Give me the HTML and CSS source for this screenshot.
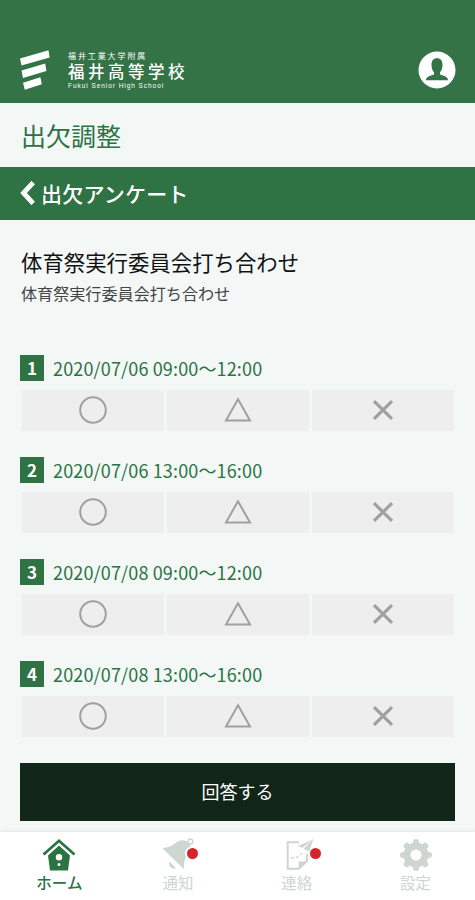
FILE: index.html
```
<!DOCTYPE html>
<html lang="ja">

<head>
    <meta charset="UTF-8">
    <meta name="viewport" content="width=device-width, initial-scale=1.0">
    <title>出欠調整</title>
    <link rel="stylesheet" href="styles.css">
</head>

<body>
    <!-- shared icons -->
    <svg class="defs" width="0" height="0">
        <symbol id="maru" viewBox="0 0 30 30">
            <circle cx="15" cy="15" r="12.8" />
        </symbol>
        <symbol id="sankaku" viewBox="0 0 30 30">
            <path d="M15 4.2 27 25.4H3Z" />
        </symbol>
        <symbol id="batsu" viewBox="0 0 30 30">
            <path d="M6 6.2 24 23.8M24 6.2 6 23.8" stroke-width="3.2" />
        </symbol>
    </svg>

    <header class="header">
        <div class="logo">
            <svg class="logo-mark" viewBox="0 0 30 40">
                <path d="M0 8.5 28.5.3 29.6 7.4 1.5 15.6ZM1.6 20.6 25.2 13.6 26.4 21 2.9 28ZM3 32.7 20.4 27.2 21.8 34.3 4.8 39.8Z" />
            </svg>
            <div class="logo-text">
                <span class="logo-sub">福井工業大学附属</span>
                <span class="logo-name">福井高等学校</span>
                <span class="logo-en">Fukui Senior High School</span>
            </div>
        </div>
        <svg class="user" viewBox="0 0 38 38">
            <circle cx="19" cy="19" r="18.5" fill="#fff" />
            <path d="M19 7.2c-3.800 0-5.500 2.700-5.500 6.500 0 3.400 1 5.900 2.500 7.500v2.200c-4 1.600-8 1.800-8 5.800h22c0-4-4-4.200-8-5.800v-2.200c1.500-1.600 2.500-4.100 2.500-7.500 0-3.800-1.700-6.500-5.500-6.500z" fill="#347346" />
        </svg>
    </header>

    <h1 class="page-title">出欠調整</h1>

    <div class="back-bar">
        <svg class="back-icon" viewBox="0 0 16 24">
            <path d="M13.2 1.5 3.500 12 13.2 22.5" />
        </svg>
        <span>出欠アンケート</span>
    </div>

    <main class="content">
        <h2>体育祭実行委員会打ち合わせ</h2>
        <p class="detail">体育祭実行委員会打ち合わせ</p>

        <section class="slot">
            <div class="slot-head"><span class="num">1</span><span class="date">2020/07/06 09:00～12:00</span></div>
            <div class="choices">
                <div class="choice"><svg><use href="#maru" /></svg></div>
                <div class="choice"><svg><use href="#sankaku" /></svg></div>
                <div class="choice"><svg><use href="#batsu" /></svg></div>
            </div>
        </section>
        <section class="slot">
            <div class="slot-head"><span class="num">2</span><span class="date">2020/07/06 13:00～16:00</span></div>
            <div class="choices">
                <div class="choice"><svg><use href="#maru" /></svg></div>
                <div class="choice"><svg><use href="#sankaku" /></svg></div>
                <div class="choice"><svg><use href="#batsu" /></svg></div>
            </div>
        </section>
        <section class="slot">
            <div class="slot-head"><span class="num">3</span><span class="date">2020/07/08 09:00～12:00</span></div>
            <div class="choices">
                <div class="choice"><svg><use href="#maru" /></svg></div>
                <div class="choice"><svg><use href="#sankaku" /></svg></div>
                <div class="choice"><svg><use href="#batsu" /></svg></div>
            </div>
        </section>
        <section class="slot">
            <div class="slot-head"><span class="num">4</span><span class="date">2020/07/08 13:00～16:00</span></div>
            <div class="choices">
                <div class="choice"><svg><use href="#maru" /></svg></div>
                <div class="choice"><svg><use href="#sankaku" /></svg></div>
                <div class="choice"><svg><use href="#batsu" /></svg></div>
            </div>
        </section>

        <button type="button" class="submit">回答する</button>
    </main>

    <nav class="tabs">
        <a class="tab active">
            <svg viewBox="0 0 34 34">
                <path d="M1.5 17.5 17 3.8 32.500 17.5" fill="none" stroke="currentColor" stroke-width="2.800" />
                <path fill-rule="evenodd" d="M17 8.500 28 18.500 26 33.500H8L6 18.500ZM17 17a3.200 3.200 0 1 0 0 6.400 3.200 3.200 0 0 0 0-6.400ZM17 26a1.500 1.500 0 1 0 0 3 1.500 1.500 0 0 0 0-3Z" fill="currentColor" />
            </svg>
            <span>ホーム</span>
        </a>
        <a class="tab">
            <svg viewBox="0 0 34 34">
                <circle cx="29.5" cy="4.500" r="2.400" fill="none" stroke="currentColor" stroke-width="1.500" />
                <path d="M1.200 11C8 11 11.500 8.500 15 5.800 19 2.500 24 2.500 27.500 5.800c3.500 4 3 8-.5 12-3.500 4-5 8-3.500 15ZM8.500 24.500l6.500 6.800c-4 1.500-8-1.500-6.500-6.800Z" fill="currentColor" />
            </svg>
            <i class="dot"></i>
            <span>通知</span>
        </a>
        <a class="tab mail">
            <svg viewBox="0 0 34 34">
                <path d="M19 5.200H7.700v26.600H19L27 23.500V17" fill="none" stroke="currentColor" stroke-width="2" />
                <path d="M18.500 33V24.500H28ZM33.500 2 17.500 9.300l5 1.400ZM33.500 2 23.500 11.700 29 14.500Z" fill="currentColor" />
                <path d="M11 20.500c5 1.500 10-1.500 12-6.500" fill="none" stroke="currentColor" stroke-width="1.400" stroke-dasharray="3 2" />
            </svg>
            <i class="dot"></i>
            <span>連絡</span>
        </a>
        <a class="tab">
            <svg viewBox="0 0 34 34">
                <circle cx="17" cy="18" r="9" fill="none" stroke="currentColor" stroke-width="7" />
                <path d="M17 5v26M4 18h26M7.800 8.800l18.400 18.400M26.200 8.800l-18.400 18.400" fill="none" stroke="currentColor" stroke-width="6" stroke-linecap="round" />
                <circle cx="17" cy="18" r="5.600" fill="#fff" />
            </svg>
            <span>設定</span>
        </a>
    </nav>
</body>

</html>
```
FILE: styles.css
```
* {
    box-sizing: border-box;
}

body {
    margin: 0;
    height: 900px;
    display: flex;
    flex-direction: column;
    overflow: hidden;
    background: #f3f8f7;
    color: #111;
    font-family: "Noto Sans CJK JP", sans-serif;
}

.defs {
    position: absolute;
}

.header {
    height: 103px;
    padding: 50px 19px 0 20px;
    display: flex;
    justify-content: space-between;
    align-items: flex-start;
    background: #347346;
    color: #fff;
}

.logo {
    display: flex;
    gap: 18px;
}

.logo-mark {
    width: 30px;
    height: 40px;
    fill: #fff;
}

.logo-text {
    display: flex;
    flex-direction: column;
    white-space: nowrap;
}

.logo-sub {
    font-size: 8px;
    line-height: 12px;
    letter-spacing: 1.9px;
}

.logo-name {
    font-size: 16.5px;
    line-height: 18px;
    letter-spacing: 3.5px;
    font-weight: 500;
}

.logo-en {
    font-family: "Liberation Sans", sans-serif;
    font-size: 6.5px;
    line-height: 11px;
    letter-spacing: 0.95px;
}

.user {
    width: 38px;
    height: 38px;
    margin-top: 1px;
}

.page-title {
    height: 64px;
    margin: 0;
    padding-left: 21px;
    font-size: 25px;
    font-weight: 400;
    line-height: 64px;
    color: #2c7344;
}

.back-bar {
    height: 53px;
    padding: 0 0 1px 20px;
    display: flex;
    align-items: center;
    gap: 5px;
    background: #2f7344;
    color: #fff;
    font-size: 21px;
    font-weight: 500;
    letter-spacing: 0.2px;
}

.back-icon {
    width: 16px;
    height: 24px;
    fill: none;
    stroke: #fff;
    stroke-width: 4.8;
}

.content {
    flex: 1;
    padding: 26px 20px 0;
}

h2 {
    margin: 0;
    padding-left: 1px;
    font-size: 21.4px;
    font-weight: 400;
    line-height: 32px;
}

.detail {
    margin: 3px 0 50px;
    padding-left: 1px;
    font-size: 16.1px;
    line-height: 24px;
    color: #444;
}

.slot {
    height: 102px;
}

.slot-head {
    display: flex;
    align-items: center;
    gap: 9px;
    height: 26px;
    color: #2c7344;
}

.num {
    width: 24px;
    height: 26px;
    background: #2f7344;
    color: #fff;
    font-size: 17px;
    font-weight: 700;
    line-height: 25px;
    text-align: center;
}

.date {
    font-size: 18px;
    line-height: 26px;
    letter-spacing: 0.15px;
}

.choices {
    display: grid;
    grid-template-columns: repeat(3, 1fr);
    gap: 3px;
    margin: 9px 1px 0 2px;
}

.choice {
    height: 41px;
    padding-bottom: 1px;
    display: flex;
    align-items: center;
    justify-content: center;
    background: #eee;
}

.choice svg {
    width: 30px;
    height: 30px;
    fill: none;
    stroke: #a0a0a0;
    stroke-width: 2;
}

.submit {
    display: block;
    width: 100%;
    height: 58px;
    padding: 0 0 3px;
    border: none;
    background: #112618;
    color: #fff;
    font-family: inherit;
    font-size: 18px;
}

.tabs {
    height: 68px;
    padding-top: 5px;
    display: flex;
    justify-content: space-between;
    background: #fff;
    box-shadow: 0 -1px 3px rgba(0, 0, 0, 0.08);
}

.tab {
    position: relative;
    width: 119px;
    display: flex;
    flex-direction: column;
    align-items: center;
    color: #cdd6d0;
    font-size: 15.5px;
    line-height: 22px;
}

.tab svg {
    width: 34px;
    height: 34px;
}

.active {
    color: #2c7344;
    font-weight: 500;
}

/* unread mark */
.dot {
    position: absolute;
    top: 11px;
    left: 68px;
    width: 11px;
    height: 11px;
    border-radius: 50%;
    background: #d7232b;
    box-shadow: 0 0 0 2px #fff;
}

.mail .dot {
    left: 72px;
    box-shadow: none;
}
```
